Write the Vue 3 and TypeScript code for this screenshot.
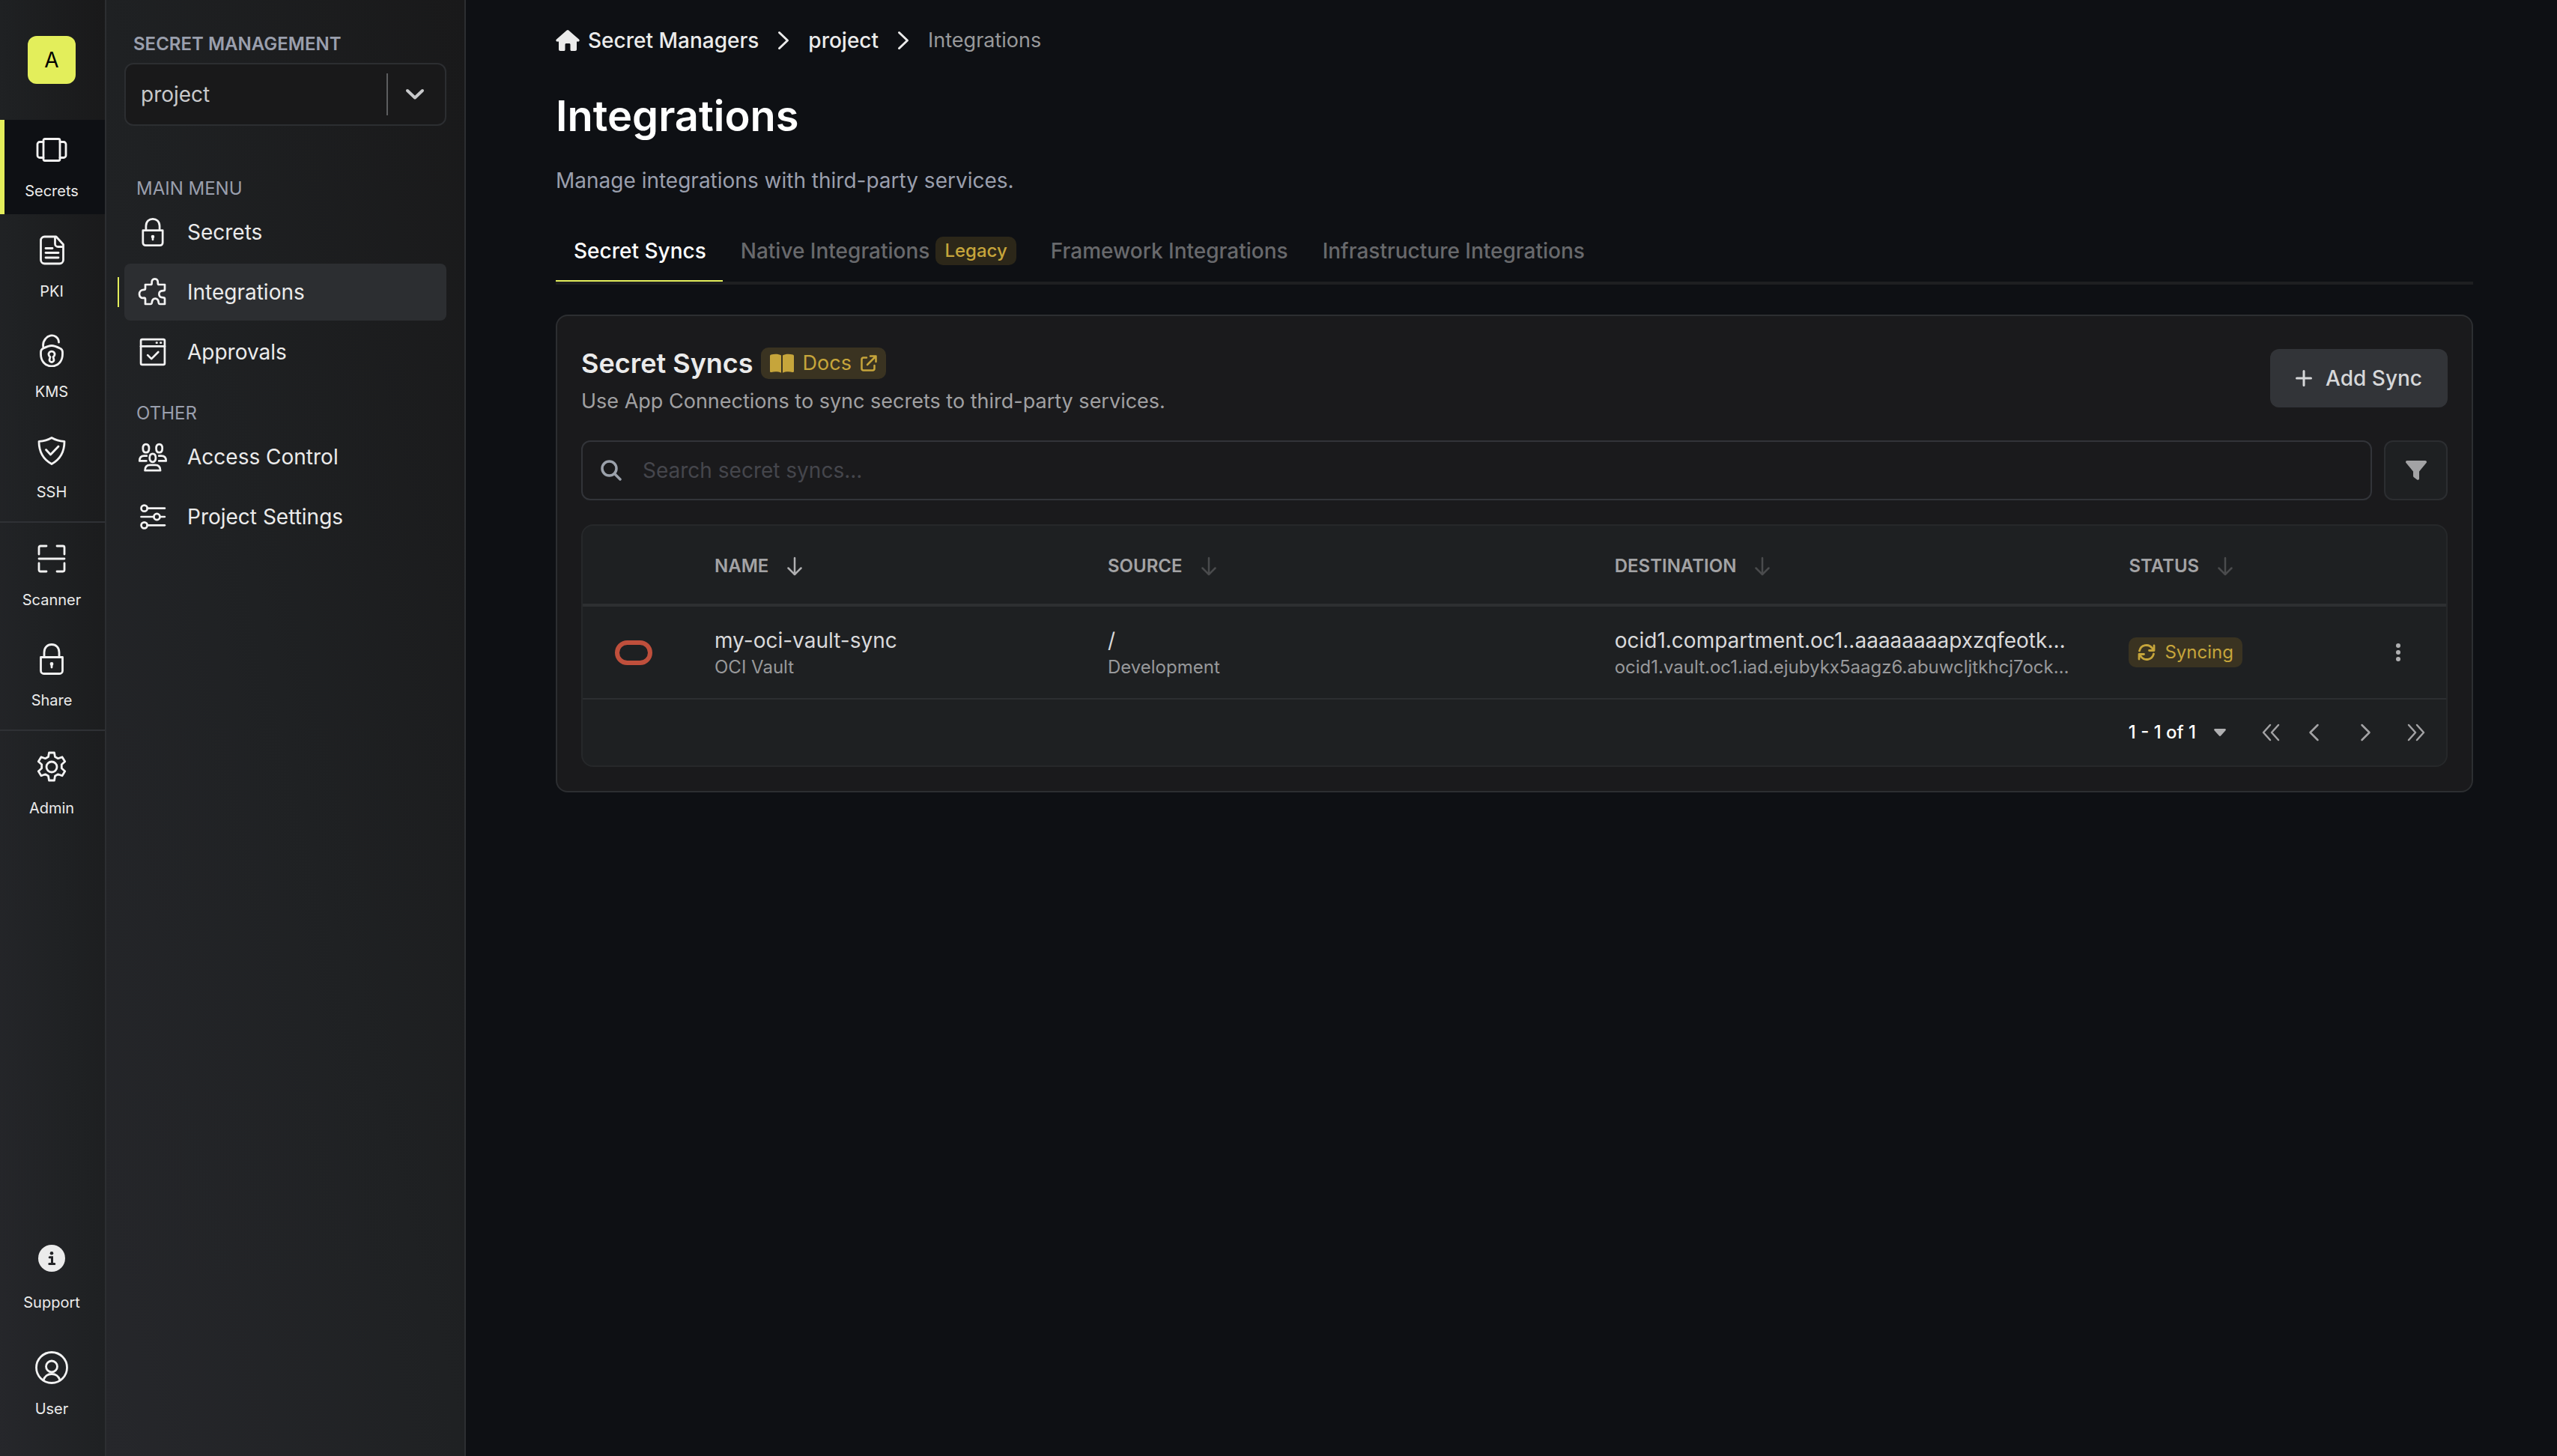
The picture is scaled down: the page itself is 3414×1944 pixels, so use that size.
<script setup lang="ts">
import { ref } from 'vue'

interface RailItem {
  label: string
  icon: string
  active?: boolean
}

interface MenuItem {
  label: string
  icon: string
  active?: boolean
}

interface Column {
  key: string
  label: string
  sorted?: boolean
}

const strokes: Record<string, string[]> = {
  secrets: [
    'M13 7.500h18a2 2 0 0 1 2 2v25a2 2 0 0 1-2 2H13a2 2 0 0 1-2-2v-25a2 2 0 0 1 2-2z',
    'M11 11.500H6a3 3 0 0 0-3 3v15a3 3 0 0 0 3 3h5',
    'M33 11.500h5a3 3 0 0 1 3 3v15a3 3 0 0 1-3 3h-5',
  ],
  pki: [
    'M28 4H12.500a5 5 0 0 0-5 5v26a5 5 0 0 0 5 5h20a5 5 0 0 0 5-5V14.500z',
    'M26.500 4.500v9a4 4 0 0 0 4 4H37',
    'M14 19.500h9',
    'M14 25.500h17',
    'M14 32h17',
  ],
  kms: [
    'M22 15.500c-4 0-7 1.500-11 3.500-2.500 1-3.500 2-3.500 5v3c0 8 5 16 14.500 16s14.500-8 14.500-16v-3c0-3-1-4-3.500-5-4-2-7-3.500-11-3.500z',
    'M11 18.500c-1-4 0-9 3-12.500 3-4 9-5.500 13.500-2.500 2.500 1.800 4 4 4 7.500',
    'M20 30.500a4 4 0 1 1 4 0l1 4a2.500 2.500 0 0 1-6 0z',
  ],
  ssh: [
    'M22 4.500c5 3 10.500 4.500 17 4.800 0 13-5.500 24-17 30.200C10.500 33.300 5 22.300 5 9.300c6.500-.3 12-1.800 17-4.800z',
    'M14.500 20.500l6 6.500L31 16',
  ],
  scanner: [
    'M15 5H7a2 2 0 0 0-2 2v9',
    'M29 5h8a2 2 0 0 1 2 2v9',
    'M15 39H7a2 2 0 0 1-2-2v-9',
    'M29 39h8a2 2 0 0 0 2-2v-9',
    'M5 22h34',
  ],
  lock: [
    'M7.500 19.500h29v18a4 4 0 0 1-4 4h-21a4 4 0 0 1-4-4z',
    'M12 19v-6C12 6.500 16.500 2.500 22 2.500S32 6.500 32 13v6',
    'M22 29v4',
    'M21 28.500a1 1 0 1 1 2 0a1 1 0 1 1-2 0',
  ],
  gear: [
    'M18.500 3h7l1 5.500 4 2.200 5.500-2 3.700 6.100-4.400 4v5l4.400 3.900-3.700 6.100-5.500-2-4 2.200-1 6h-7l-1-6-4-2.200-5.500 2-3.700-6.100 4.400-3.900v-5l-4.400-4L8 8.700l5.500 2 4-2.200z',
    'M15 22a7 7 0 1 1 14 0a7 7 0 1 1-14 0',
  ],
  user: [
    'M1.500 22a20.500 20.500 0 1 1 41 0a20.500 20.500 0 1 1-41 0',
    'M14.500 20.500a7.500 7.500 0 1 1 15 0a7.500 7.500 0 1 1-15 0',
    'M11 39c1.500-5.500 6-8.500 11-8.500S31.500 33.500 33 39',
  ],
  puzzle: [
    'M11 11h7.500c1.500 0 2-.6 2-2C20 5 22 2.600 25 2.600s5 2.400 4.500 6.400c0 1.400.5 2 2 2h8.100v7c0 1.400-.6 2-2 2-4 0-6.400 2-6.400 5s2.400 5 6.400 5c1.400 0 2 .6 2 2v7.600h-7c-1.200 0-1.800-.6-2-2-.4-4-2-6-5-6s-4.600 2-5 6c-.2 1.400-.8 2-2 2H11v-7.200c0-1.400-.6-2-2-2C5 31.400 2.200 29 2.200 25S5 18.600 9 18.600c1.400 0 2-.6 2-2z',
  ],
  approvals: [
    'M6.500 3.500h31a2 2 0 0 1 2 2v33a2 2 0 0 1-2 2h-31a2 2 0 0 1-2-2v-33a2 2 0 0 1 2-2z',
    'M4.500 13.500h35',
    'M27.500 8.500h.5',
    'M33.500 8.500h.5',
    'M14.500 26.500l5.500 5.500L30 22',
  ],
  people: [
    'M12 3.500c3 0 4.500 2 4.500 6s-1.500 6-4.500 6-4.500-2-4.500-6 1.500-6 4.500-6z',
    'M31.500 3.500c3 0 4.500 2 4.500 6s-1.500 6-4.500 6-4.500-2-4.500-6 1.500-6 4.500-6z',
    'M21.800 17.500c3 0 4.500 2 4.500 6s-1.500 6-4.500 6-4.500-2-4.500-6 1.500-6 4.500-6z',
    'M12.500 28H2.500c0-5.500 2.500-7.500 7-7.500h3.500',
    'M31 28h10.500c0-5.500-2.500-7.500-7-7.500h-3.500',
    'M10.500 42c0-6 3-8 7.500-8h7.600c4.500 0 7.500 2 7.500 8z',
  ],
  sliders: [
    'M5 9.500a4.500 4.500 0 1 1 9 0a4.500 4.500 0 1 1-9 0',
    'M14 9.500h25.500',
    'M23.500 22a4.500 4.500 0 1 1 9 0a4.500 4.500 0 1 1-9 0',
    'M5 22h18.500',
    'M32.500 22h7',
    'M5 34.500a4.500 4.500 0 1 1 9 0a4.500 4.500 0 1 1-9 0',
    'M14 34.500h25.500',
  ],
}

const railGroups: RailItem[][] = [
  [
    { label: 'Secrets', icon: 'secrets', active: true },
    { label: 'PKI', icon: 'pki' },
    { label: 'KMS', icon: 'kms' },
    { label: 'SSH', icon: 'ssh' },
  ],
  [
    { label: 'Scanner', icon: 'scanner' },
    { label: 'Share', icon: 'lock' },
  ],
  [{ label: 'Admin', icon: 'gear' }],
]

const menus: { title: string; items: MenuItem[] }[] = [
  {
    title: 'MAIN MENU',
    items: [
      { label: 'Secrets', icon: 'lock' },
      { label: 'Integrations', icon: 'puzzle', active: true },
      { label: 'Approvals', icon: 'approvals' },
    ],
  },
  {
    title: 'OTHER',
    items: [
      { label: 'Access Control', icon: 'people' },
      { label: 'Project Settings', icon: 'sliders' },
    ],
  },
]

const tabs = [
  { label: 'Secret Syncs' },
  { label: 'Native Integrations', badge: 'Legacy' },
  { label: 'Framework Integrations' },
  { label: 'Infrastructure Integrations' },
]

const columns: Column[] = [
  { key: 'name', label: 'NAME', sorted: true },
  { key: 'source', label: 'SOURCE' },
  { key: 'destination', label: 'DESTINATION' },
  { key: 'status', label: 'STATUS' },
]

const syncs = [
  {
    name: 'my-oci-vault-sync',
    type: 'OCI Vault',
    path: '/',
    environment: 'Development',
    destination: 'ocid1.compartment.oc1..aaaaaaaapxzqfeotk…',
    destinationDetail: 'ocid1.vault.oc1.iad.ejubykx5aagz6.abuwcljtkhcj7ock…',
    status: 'Syncing',
  },
]

const activeTab = ref('Secret Syncs')
const project = ref('project')
const search = ref('')
</script>

<template>
  <div class="app">
    <nav class="rail" aria-label="Products">
      <a class="logo" href="#">A</a>
      <div v-for="(group, g) in railGroups" :key="g" class="rail-group">
        <a
          v-for="item in group"
          :key="item.label"
          href="#"
          class="rail-item"
          :class="{ active: item.active }"
        >
          <svg class="line-icon" viewBox="0 0 44 44" aria-hidden="true">
            <path v-for="d in strokes[item.icon]" :key="d" :d="d" />
          </svg>
          <span>{{ item.label }}</span>
        </a>
      </div>
      <div class="rail-bottom">
        <button type="button" class="rail-item support">
          <svg class="info-icon" viewBox="0 0 36 36" aria-hidden="true">
            <circle cx="18" cy="18" r="18" fill="#ebebeb" />
            <circle cx="18" cy="11.200" r="2.300" fill="#222326" />
            <path d="M15.200 16.800h3.300v8.200M14.800 25.500h7" fill="none" stroke="#222326" stroke-width="3" stroke-linecap="round" />
          </svg>
          <span>Support</span>
        </button>
        <button type="button" class="rail-item">
          <svg class="line-icon" viewBox="0 0 44 44" aria-hidden="true">
            <path v-for="d in strokes.user" :key="d" :d="d" />
          </svg>
          <span>User</span>
        </button>
      </div>
    </nav>

    <aside class="sidebar">
      <label class="project-label" for="project">SECRET MANAGEMENT</label>
      <div class="project-select">
        <select id="project" v-model="project">
          <option value="project">project</option>
        </select>
        <span class="select-mark">
          <svg width="26" height="16" viewBox="0 0 26 16" aria-hidden="true">
            <path d="M3 3l10 9.500L23 3" fill="none" stroke="#c8c9cb" stroke-width="4" stroke-linecap="round" stroke-linejoin="round" />
          </svg>
        </span>
      </div>
      <nav class="menus" aria-label="Project">
        <section v-for="menu in menus" :key="menu.title">
          <h2>{{ menu.title }}</h2>
          <ul>
            <li v-for="item in menu.items" :key="item.label" :class="{ active: item.active }">
              <a href="#">
                <svg class="line-icon" viewBox="0 0 44 44" aria-hidden="true">
                  <path v-for="d in strokes[item.icon]" :key="d" :d="d" />
                </svg>
                {{ item.label }}
              </a>
            </li>
          </ul>
        </section>
      </nav>
    </aside>

    <main>
      <nav class="breadcrumb" aria-label="Breadcrumb">
        <a href="#" class="home">
          <svg width="32" height="28" viewBox="0 0 32 28" aria-hidden="true">
            <path d="M14.700.6 1 12.500c-1.300 1.200-.7 3 1 3h2V26c0 1.200.8 2 2 2h5c.8 0 1.500-.7 1.500-1.500V19.500c0-.8.7-1.500 1.500-1.500h4c.8 0 1.500.7 1.500 1.500v7c0 .8.7 1.500 1.500 1.500h5c1.200 0 2-.8 2-2V15.500h2c1.700 0 2.300-1.800 1-3L17.300.6a2 2 0 0 0-2.600 0z" fill="#ebebeb" />
          </svg>
          Secret Managers
        </a>
        <svg class="sep" width="16" height="26" viewBox="0 0 16 26" aria-hidden="true"><path d="M2.500 2.500 13.500 13l-11 10.500" /></svg>
        <a href="#">project</a>
        <svg class="sep" width="16" height="26" viewBox="0 0 16 26" aria-hidden="true"><path d="M2.500 2.500 13.500 13l-11 10.500" /></svg>
        <span>Integrations</span>
      </nav>

      <h1>Integrations</h1>
      <p class="lead">Manage integrations with third-party services.</p>

      <div class="tabs" role="tablist">
        <button
          v-for="tab in tabs"
          :key="tab.label"
          type="button"
          role="tab"
          class="tab"
          :class="{ active: tab.label === activeTab }"
          :aria-selected="tab.label === activeTab"
          @click="activeTab = tab.label"
        >
          {{ tab.label }}<span v-if="tab.badge" class="badge legacy">{{ tab.badge }}</span>
        </button>
      </div>

      <section class="card">
        <header class="card-head">
          <div>
            <div class="card-title">
              <h2>Secret Syncs</h2>
              <a href="#" class="badge docs">
                <svg width="32" height="26" viewBox="0 0 32 26" aria-hidden="true">
                  <path d="M15 2.500C12 .6 6 .4 1.500 1.600.5 1.900 0 2.500 0 3.500v20c0 1.200 1 1.800 2 1.500 4-1 9-1 13 .8zM17 2.500C20 .6 26 .4 30.500 1.600c1 .3 1.500.9 1.500 1.900v20c0 1.200-1 1.800-2 1.500-4-1-9-1-13 .8z" fill="#c6a53b" />
                </svg>
                Docs
                <svg width="22" height="22" viewBox="0 0 22 22" fill="none" stroke="#c6a53b" stroke-width="2.500" stroke-linecap="round" stroke-linejoin="round" aria-hidden="true">
                  <path d="M8 3.500H4A2.500 2.500 0 0 0 1.500 6v12A2.500 2.500 0 0 0 4 20.500h12a2.500 2.500 0 0 0 2.500-2.500v-4M13 1.500h7.500V9M20 2 9 13" />
                </svg>
              </a>
            </div>
            <p>Use App Connections to sync secrets to third-party services.</p>
          </div>
          <button type="button" class="add">
            <svg width="22" height="22" viewBox="0 0 22 22" aria-hidden="true">
              <path d="M11 1.500v19M1.500 11h19" stroke="#d6d7d9" stroke-width="3" stroke-linecap="round" />
            </svg>
            Add Sync
          </button>
        </header>

        <div class="toolbar">
          <label class="search">
            <svg width="28" height="28" viewBox="0 0 28 28" fill="none" stroke="#9ba1ab" stroke-width="3.500" stroke-linecap="round" aria-hidden="true">
              <circle cx="11.500" cy="11.500" r="9.500" />
              <path d="m18.500 18.500 7.500 7.500" />
            </svg>
            <input v-model="search" type="text" placeholder="Search secret syncs..." aria-label="Search secret syncs" />
          </label>
          <button type="button" class="filter" aria-label="Filter">
            <svg width="28" height="26" viewBox="0 0 28 26" aria-hidden="true">
              <path d="M1.800 0h24.400c1.600 0 2.400 1.900 1.300 3.100L18 14.500V24c0 1.500-1.600 2.300-2.800 1.400l-4.300-3.200c-.6-.4-.9-1-.9-1.600v-6L.5 3.100C-.6 1.900.2 0 1.800 0z" fill="#a3a3a5" />
            </svg>
          </button>
        </div>

        <div class="table-wrap">
          <table>
            <colgroup>
              <col class="col-icon" />
              <col class="col-name" />
              <col class="col-source" />
              <col class="col-destination" />
              <col class="col-status" />
              <col />
            </colgroup>
            <thead>
              <tr>
                <th aria-label="Service"></th>
                <th v-for="column in columns" :key="column.key" scope="col">
                  <button type="button" class="sort" :class="{ sorted: column.sorted }">
                    {{ column.label }}
                    <svg width="22" height="26" viewBox="0 0 22 26" aria-hidden="true">
                      <path d="M11 2v21.500M2.500 15.500l8.500 8.500 8.500-8.500" />
                    </svg>
                  </button>
                </th>
                <th aria-label="Actions"></th>
              </tr>
            </thead>
            <tbody>
              <tr v-for="sync in syncs" :key="sync.name">
                <td class="service">
                  <svg width="50" height="34" viewBox="0 0 50 34" aria-hidden="true">
                    <rect x="3" y="4" width="44" height="27" rx="13.500" fill="none" stroke="#bf4f3c" stroke-width="6" />
                  </svg>
                </td>
                <td>
                  <div class="primary">{{ sync.name }}</div>
                  <div class="secondary">{{ sync.type }}</div>
                </td>
                <td>
                  <div class="primary">{{ sync.path }}</div>
                  <div class="secondary">{{ sync.environment }}</div>
                </td>
                <td>
                  <div class="primary">{{ sync.destination }}</div>
                  <div class="secondary">{{ sync.destinationDetail }}</div>
                </td>
                <td>
                  <span class="badge syncing">
                    <svg width="24" height="22" viewBox="0 0 24 22" fill="none" stroke="#c6a53b" stroke-width="2.800" stroke-linecap="round" stroke-linejoin="round" aria-hidden="true">
                      <path d="M2.500 9a9.500 9.500 0 0 1 17-3.500l2 2.500M22 2v6.500h-6.500M21.500 13a9.500 9.500 0 0 1-17 3.500l-2-2.500M2 20v-6.500h6.500" />
                    </svg>
                    {{ sync.status }}
                  </span>
                </td>
                <td class="actions">
                  <button type="button" aria-label="Sync options">
                    <svg width="8" height="26" viewBox="0 0 8 26" fill="#b0b0b2" aria-hidden="true">
                      <circle cx="4" cy="4" r="3" /><circle cx="4" cy="13" r="3" /><circle cx="4" cy="22" r="3" />
                    </svg>
                  </button>
                </td>
              </tr>
            </tbody>
          </table>
          <footer class="pager">
            <button type="button" class="range">
              1 - 1 of 1
              <svg width="16" height="10" viewBox="0 0 16 10" aria-hidden="true"><path d="M1.500 0h13c1.200 0 1.800 1.300 1 2.200L9.200 9.300a1.700 1.700 0 0 1-2.400 0L.5 2.200C-.3 1.300.3 0 1.500 0z" fill="#b0b0b2" /></svg>
            </button>
            <div class="pages back">
              <button type="button" aria-label="First page"><svg width="24" height="24" viewBox="0 0 24 24"><path d="M11 2 2 12l9 10M22 2l-9 10 9 10" /></svg></button>
              <button type="button" aria-label="Previous page"><svg width="24" height="24" viewBox="0 0 24 24"><path d="M16.500 2l-10 10 10 10" /></svg></button>
            </div>
            <div class="pages forward">
              <button type="button" aria-label="Next page"><svg width="24" height="24" viewBox="0 0 24 24"><path d="M7.500 2l10 10-10 10" /></svg></button>
              <button type="button" aria-label="Last page"><svg width="24" height="24" viewBox="0 0 24 24"><path d="M2 2l9 10-9 10M13 2l9 10-9 10" /></svg></button>
            </div>
          </footer>
        </div>
      </section>
    </main>
  </div>
</template>

<style>
body {
  margin: 0;
  background: #0e1014;
}
</style>

<style scoped>
.app {
  display: flex;
  min-height: 100vh;
  font-family: Inter, "Liberation Sans", sans-serif;
  font-size: 28px;
  line-height: 40px;
  color: #ebebeb;
}

* {
  box-sizing: border-box;
}

button {
  padding: 0;
  border: 0;
  background: none;
  color: inherit;
  font: inherit;
  cursor: pointer;
}

a {
  color: inherit;
  text-decoration: none;
}

h1,
h2,
p,
ul {
  margin: 0;
  padding: 0;
}

svg {
  display: block;
  flex: none;
}

.line-icon {
  width: 44px;
  height: 44px;
  fill: none;
  stroke: #f2f2f2;
  stroke-width: 2.8;
  stroke-linecap: round;
  stroke-linejoin: round;
}

.rail {
  flex: none;
  display: flex;
  flex-direction: column;
  width: 142px;
  padding-bottom: 32px;
  border-right: 2px solid #2c2e31;
  background: linear-gradient(to top right, #26272b, #1f2123, #19191a);
}

.logo {
  display: flex;
  align-items: center;
  justify-content: center;
  align-self: center;
  width: 64px;
  height: 64px;
  margin: 48px 2px 48px 0;
  border-radius: 12px;
  background: #e3ee5b;
  color: #000;
}

.rail-group {
  display: flex;
  flex-direction: column;
  gap: 8px;
}

.rail-group + .rail-group {
  margin-top: 8px;
  padding-top: 8px;
  border-top: 2px solid #2f3135;
}

.rail-item {
  display: flex;
  flex-direction: column;
  align-items: center;
  gap: 20px;
  width: 100%;
  height: 126px;
  padding: 18px 2px 0 0;
  font-size: 20px;
  line-height: 26px;
}

.rail-item.active {
  border-left: 6px solid #e3ee5b;
  padding-right: 8px;
  background: #0e1014;
}

.rail-bottom {
  display: flex;
  flex-direction: column;
  gap: 16px;
  margin-top: auto;
}

.info-icon {
  width: 36px;
  height: 36px;
}

.support {
  gap: 28px;
}

.sidebar {
  flex: none;
  width: 480px;
  padding: 42px 24px;
  border-right: 2px solid #2c2e31;
  background: linear-gradient(to top right, #26272b, #1f2123, #19191a);
}

.project-label {
  display: block;
  padding-left: 12px;
  font-size: 24px;
  font-weight: 600;
  line-height: 34px;
  color: #9a9fad;
}

.project-select {
  display: grid;
  margin-top: 8px;
}

.project-select select {
  grid-area: 1 / 1;
  height: 84px;
  padding: 0 20px;
  border: 2px solid #2c2e31;
  border-radius: 12px;
  appearance: none;
  background: #19191a;
  color: #c8c9cb;
  font: inherit;
}

.select-mark {
  grid-area: 1 / 1;
  align-self: center;
  justify-self: end;
  display: flex;
  align-items: center;
  justify-content: center;
  width: 80px;
  height: 56px;
  padding-right: 6px;
  border-left: 2px solid #5c5d5f;
  pointer-events: none;
}

.menus {
  margin-top: 66px;
}

.menus section {
  padding-bottom: 26px;
}

.menus h2 {
  padding-left: 16px;
  font-size: 24px;
  font-weight: 400;
  line-height: 36px;
  color: #9a9fad;
}

.menus ul {
  display: flex;
  flex-direction: column;
  gap: 4px;
  margin-top: 2px;
  list-style: none;
}

.menus li {
  position: relative;
}

.menus a {
  display: flex;
  align-items: center;
  gap: 26px;
  height: 76px;
  padding-left: 18px;
  border-radius: 8px;
}

.menus .line-icon {
  width: 40px;
  height: 40px;
  stroke-width: 3;
}

.menus .active a {
  background: #2c2e31;
}

.menus .active::before {
  content: "";
  position: absolute;
  top: 18px;
  left: -9px;
  width: 2px;
  height: 40px;
  background: #e3ee5b;
}

main {
  flex: 1;
  min-width: 0;
  padding: 34px 112px 34px 120px;
}

.breadcrumb {
  display: flex;
  align-items: center;
  font-weight: 500;
}

.breadcrumb .home {
  display: flex;
  align-items: center;
  gap: 11px;
}

.breadcrumb span {
  font-size: 27px;
  font-weight: 400;
  color: #98999b;
}

.sep {
  margin: 0 25px;
  fill: none;
  stroke: #ebebeb;
  stroke-width: 3;
  stroke-linecap: round;
  stroke-linejoin: round;
}

h1 {
  margin-top: 45px;
  font-size: 56px;
  font-weight: 600;
  line-height: 72px;
  color: #fff;
}

.lead {
  margin-top: 30px;
  color: #9a9fad;
}

.tabs {
  display: flex;
  margin-top: 35px;
  border-bottom: 4px solid #1e1f21;
}

.tab {
  display: flex;
  align-items: center;
  gap: 8px;
  height: 80px;
  padding: 0 22px 0 24px;
  border-bottom: 2px solid transparent;
  font-weight: 500;
  color: #68696c;
}

.tab.active {
  border-color: #e3ee5b;
  color: #fff;
}

.badge {
  display: inline-flex;
  align-items: center;
  border-radius: 10px;
  background: #3a3321;
  color: #c6a53b;
}

.legacy {
  height: 38px;
  padding: 0 12px;
  background: #2c2719;
  font-size: 24px;
}

.card {
  margin-top: 40px;
  padding: 32px;
  border: 2px solid #2c2e31;
  border-radius: 16px;
  background: #1a1a1c;
}

.card-head {
  display: flex;
  align-items: center;
  justify-content: space-between;
}

.card-title {
  display: flex;
  align-items: center;
  gap: 10px;
  height: 62px;
}

.card-title h2 {
  font-size: 36px;
  font-weight: 600;
}

.docs {
  gap: 12px;
  height: 42px;
  padding: 0 12px;
  font-size: 27px;
}

.card-head p {
  font-size: 27px;
  color: #a0a0a2;
}

.add {
  display: flex;
  align-items: center;
  gap: 18px;
  height: 78px;
  padding: 0 34px;
  border-radius: 12px;
  background: #323438;
  font-weight: 500;
  color: #d6d7d9;
}

.toolbar {
  display: flex;
  gap: 16px;
  margin: 32px 0;
}

.search {
  flex: 1;
  display: flex;
  align-items: center;
  gap: 28px;
  height: 80px;
  padding: 0 24px;
  border: 2px solid #323439;
  border-radius: 12px;
}

.search input {
  flex: 1;
  height: 76px;
  padding: 0;
  border: 0;
  outline: 0;
  background: none;
  color: #ebebeb;
  font: inherit;
}

.search input::placeholder {
  color: #45464c;
  opacity: 1;
}

.filter {
  display: flex;
  align-items: center;
  justify-content: center;
  width: 85px;
  border: 2px solid #2c2e31;
  border-radius: 12px;
  background: #1e2022;
}

.table-wrap {
  border: 2px solid #26282a;
  border-radius: 16px;
  background: #1e2022;
}

table {
  width: 100%;
  table-layout: fixed;
  border-spacing: 0;
}

.col-icon {
  width: 136px;
}

.col-name {
  width: 21.1%;
}

.col-source {
  width: 27.2%;
}

.col-destination {
  width: 27.6%;
}

.col-status {
  width: 13.5%;
}

th,
td {
  padding: 0 40px;
  text-align: left;
  white-space: nowrap;
}

th {
  height: 108px;
  padding-top: 3px;
  border-bottom: 4px solid #2d2f31;
}

td {
  height: 124px;
  border-bottom: 2px solid #2c2e31;
}

.sort {
  display: flex;
  align-items: center;
  gap: 24px;
  font-size: 24px;
  font-weight: 600;
  color: #a3a3a5;
}

.sort svg {
  fill: none;
  stroke: #4a4b4d;
  stroke-width: 2.5;
  stroke-linecap: round;
  stroke-linejoin: round;
}

.sort.sorted svg {
  stroke: #b0b0b2;
}

.service svg {
  margin-left: 3px;
}

.primary {
  color: #d9d9db;
}

.secondary {
  font-size: 24px;
  line-height: 32px;
  color: #98999b;
}

.syncing {
  gap: 12px;
  height: 40px;
  padding: 0 12px;
  font-size: 24px;
}

.actions button {
  display: flex;
  justify-content: center;
  width: 48px;
}

.pager {
  display: flex;
  align-items: center;
  justify-content: flex-end;
  gap: 24px;
  height: 88px;
  padding-right: 18px;
}

.range {
  display: flex;
  align-items: center;
  gap: 24px;
  margin-right: 14px;
  font-size: 24px;
  font-weight: 500;
  color: #fff;
}

.pages {
  display: flex;
}

.pages.back {
  gap: 14px;
}

.pages.forward {
  gap: 24px;
}

.pages button {
  display: flex;
  align-items: center;
  justify-content: center;
  width: 44px;
  height: 44px;
}

.pages svg {
  fill: none;
  stroke: #a3a3a5;
  stroke-width: 2.5;
  stroke-linecap: round;
  stroke-linejoin: round;
}
</style>
